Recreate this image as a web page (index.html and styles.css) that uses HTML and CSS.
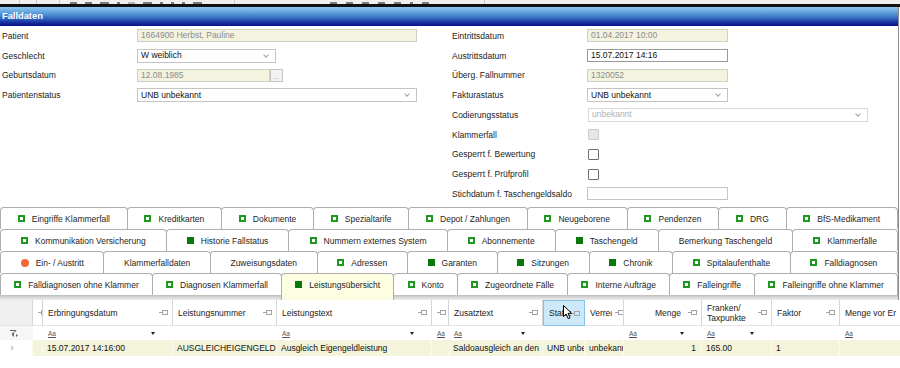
FILE: index.html
```html
<!DOCTYPE html>
<html lang="de">
<head>
    <meta charset="UTF-8">
    <meta name="viewport" content="width=device-width, initial-scale=1.0">
    <title>Falldaten</title>
    <link rel="stylesheet" href="styles.css">
</head>
<body>
    <!-- Toolbar (only the bottom edge is visible) -->
    <div class="toolbar">
        <div class="tb-group tb-g1"></div>
        <div class="tb-group tb-g2"></div>
        <div class="tb-group tb-g3"></div>
        <div class="tb-group tb-g4">
            <span class="tb-icon"></span><span class="tb-icon"></span><span class="tb-icon wide"></span>
            <span class="tb-icon small"></span><span class="tb-icon light"></span><span class="tb-icon wide"></span>
            <span class="tb-icon small"></span><span class="tb-icon small"></span><span class="tb-icon small"></span>
            <span class="tb-icon wide"></span>
        </div>
        <div class="tb-group tb-g5">
            <span class="tb-icon"></span><span class="tb-icon"></span><span class="tb-icon"></span>
            <span class="tb-icon"></span><span class="tb-icon"></span><span class="tb-icon small"></span>
            <span class="tb-icon"></span>
        </div>
    </div>

    <div class="window">
        <div class="panel-title">Falldaten</div>

        <div class="form">
            <div class="col col-left">
                <div class="row">
                    <span class="label">Patient</span>
                    <span class="field ro w-wide">1664900 Herbst, Pauline</span>
                </div>
                <div class="row">
                    <span class="label">Geschlecht</span>
                    <span class="field select w-sel">W weiblich<i class="chev"></i></span>
                </div>
                <div class="row">
                    <span class="label">Geburtsdatum</span>
                    <span class="field ro w-date">12.08.1985</span><span class="dots-btn">...</span>
                </div>
                <div class="row">
                    <span class="label">Patientenstatus</span>
                    <span class="field select w-wide">UNB unbekannt<i class="chev"></i></span>
                </div>
            </div>
            <div class="col col-right">
                <div class="row">
                    <span class="label">Eintrittsdatum</span>
                    <span class="field ro w-right">01.04.2017 10:00</span>
                </div>
                <div class="row">
                    <span class="label">Austrittsdatum</span>
                    <span class="field active w-right">15.07.2017 14:16</span>
                </div>
                <div class="row">
                    <span class="label">Überg. Fallnummer</span>
                    <span class="field ro w-right">1320052</span>
                </div>
                <div class="row">
                    <span class="label">Fakturastatus</span>
                    <span class="field select w-right">UNB unbekannt<i class="chev"></i></span>
                </div>
                <div class="row">
                    <span class="label">Codierungsstatus</span>
                    <span class="field select disabled w-code">unbekannt<i class="chev"></i></span>
                </div>
                <div class="row">
                    <span class="label">Klammerfall</span>
                    <span class="check disabled"></span>
                </div>
                <div class="row">
                    <span class="label">Gesperrt f. Bewertung</span>
                    <span class="check"></span>
                </div>
                <div class="row">
                    <span class="label">Gesperrt f. Prüfprofil</span>
                    <span class="check"></span>
                </div>
                <div class="row">
                    <span class="label">Stichdatum f. Taschengeldsaldo</span>
                    <span class="field w-right"></span>
                </div>
            </div>
        </div>

        <!-- Tabs -->
        <div class="tabs">
            <div class="tab-row">
                <div class="tab"><i class="ico"></i>Eingriffe Klammerfall</div>
                <div class="tab"><i class="ico"></i>Kreditkarten</div>
                <div class="tab"><i class="ico"></i>Dokumente</div>
                <div class="tab"><i class="ico"></i>Spezialtarife</div>
                <div class="tab"><i class="ico"></i>Depot / Zahlungen</div>
                <div class="tab"><i class="ico"></i>Neugeborene</div>
                <div class="tab"><i class="ico"></i>Pendenzen</div>
                <div class="tab"><i class="ico"></i>DRG</div>
                <div class="tab"><i class="ico"></i>BfS-Medikament</div>
            </div>
            <div class="tab-row">
                <div class="tab"><i class="ico"></i>Kommunikation Versicherung</div>
                <div class="tab"><i class="ico full"></i>Historie Fallstatus</div>
                <div class="tab"><i class="ico"></i>Nummern externes System</div>
                <div class="tab"><i class="ico"></i>Abonnemente</div>
                <div class="tab"><i class="ico full"></i>Taschengeld</div>
                <div class="tab">Bemerkung Taschengeld</div>
                <div class="tab"><i class="ico"></i>Klammerfälle</div>
            </div>
            <div class="tab-row">
                <div class="tab"><i class="ico dot"></i>Ein- / Austritt</div>
                <div class="tab">Klammerfalldaten</div>
                <div class="tab">Zuweisungsdaten</div>
                <div class="tab"><i class="ico"></i>Adressen</div>
                <div class="tab"><i class="ico full"></i>Garanten</div>
                <div class="tab"><i class="ico full"></i>Sitzungen</div>
                <div class="tab"><i class="ico full"></i>Chronik</div>
                <div class="tab"><i class="ico"></i>Spitalaufenthalte</div>
                <div class="tab"><i class="ico"></i>Falldiagnosen</div>
            </div>
            <div class="tab-row">
                <div class="tab"><i class="ico"></i>Falldiagnosen ohne Klammer</div>
                <div class="tab"><i class="ico"></i>Diagnosen Klammerfall</div>
                <div class="tab selected"><i class="ico full"></i>Leistungsübersicht</div>
                <div class="tab"><i class="ico"></i>Konto</div>
                <div class="tab"><i class="ico"></i>Zugeordnete Fälle</div>
                <div class="tab"><i class="ico"></i>Interne Aufträge</div>
                <div class="tab"><i class="ico"></i>Falleingriffe</div>
                <div class="tab"><i class="ico"></i>Falleingriffe ohne Klammer</div>
            </div>
        </div>
        <div class="tab-base"></div>

        <!-- Leistungen grid -->
        <table class="grid">
            <colgroup>
                <col class="c-sel"><col class="c-nar"><col class="c-date"><col class="c-nr"><col class="c-text">
                <col class="c-nar2"><col class="c-zus"><col class="c-stat"><col class="c-ver"><col class="c-menge">
                <col class="c-fr"><col class="c-fak"><col class="c-mv">
            </colgroup>
            <tr class="head">
                <th class="rowhead"></th>
                <th><div class="hc"><span class="ht"></span><i class="pin"></i></div></th>
                <th><div class="hc"><span class="ht">Erbringungsdatum</span><i class="pin"></i></div></th>
                <th><div class="hc"><span class="ht">Leistungsnummer</span><i class="pin"></i></div></th>
                <th><div class="hc"><span class="ht">Leistungstext</span><i class="pin"></i></div></th>
                <th><div class="hc"><span class="ht"></span><i class="pin"></i></div></th>
                <th><div class="hc"><span class="ht">Zusatztext</span><i class="pin"></i></div></th>
                <th class="hover">
                    <div class="hc"><span class="ht">Status</span><i class="pin"></i></div>
                    <svg class="cursor" width="10" height="15" viewBox="0 0 10 15">
                        <path d="M0.5 0.5 L0.5 11.5 L3.2 9 L5.2 13.6 L7 12.8 L5 8.3 L8.6 8.3 Z" fill="#fff" stroke="#000" stroke-width="1"/>
                    </svg>
                </th>
                <th><div class="hc"><span class="ht ver">Verrechnung</span><i class="pin"></i></div></th>
                <th><div class="hc right"><span class="ht">Menge</span><i class="pin"></i></div></th>
                <th><div class="hc"><span class="ht">Franken/<br>Taxpunkte</span><i class="pin"></i></div></th>
                <th><div class="hc"><span class="ht">Faktor</span><i class="pin"></i></div></th>
                <th><div class="hc"><span class="ht">Menge vor Erfassung</span></div></th>
            </tr>
            <tr class="filter">
                <td class="rowhead">
                    <svg class="funnel" width="8" height="7" viewBox="0 0 8 7">
                        <path d="M0 0.5 H6 L3.5 3 V6.5 M2.5 3 V5.5" fill="none" stroke="#666" stroke-width="1"/>
                        <path d="M6 4 L8 5.5 L6 7 Z" fill="#666"/>
                    </svg>
                </td>
                <td></td>
                <td><div class="fc"><span class="aa">Aa</span><i class="dd"></i></div></td>
                <td></td>
                <td><div class="fc"><span class="aa">Aa</span><i class="dd"></i></div></td>
                <td><div class="fc"><span class="aa">Aa</span></div></td>
                <td><div class="fc"><span class="aa">Aa</span><i class="dd"></i></div></td>
                <td></td>
                <td></td>
                <td><div class="fc"><span class="aa">Aa</span><i class="dd"></i></div></td>
                <td><div class="fc"><span class="aa">Aa</span><i class="dd"></i></div></td>
                <td></td>
                <td><div class="fc"><span class="aa">Aa</span></div></td>
            </tr>
            <tr class="data">
                <td class="rowhead"><i class="row-arrow"></i></td>
                <td></td>
                <td>15.07.2017 14:16:00</td>
                <td>AUSGLEICHEIGENGELD</td>
                <td>Ausgleich Eigengeldleistung</td>
                <td></td>
                <td>Saldoausgleich an den</td>
                <td>UNB unbekannt</td>
                <td>unbekannt</td>
                <td class="num">1</td>
                <td>165.00</td>
                <td>1</td>
                <td></td>
            </tr>
        </table>
    </div>
</body>
</html>
```

FILE: styles.css
```css
body {
    margin: 0;
    background: #fff;
    font-family: "Liberation Sans", Arial, sans-serif;
    font-size: 8.5px;
    color: #1e1e1e;
    width: 900px;
    overflow: hidden;
}

/* Toolbar */
.toolbar {
    height: 4px;
    background: #efefef;
    border-bottom: 3px solid #111;
    display: flex;
}
.tb-group {
    display: flex;
    align-items: flex-end;
    gap: 8px;
    border-right: 1px solid #c9c9c9;
    box-sizing: border-box;
}
.tb-g1 { width: 20px; }
.tb-g2 { width: 17px; }
.tb-g3 { width: 23px; }
.tb-g4 { width: 175px; padding-left: 10px; }
.tb-g5 { width: 250px; padding-left: 95px; gap: 9px; }
.tb-icon {
    width: 7px;
    height: 2px;
    background: #7a7a7a;
}
.tb-icon.wide { width: 9px; }
.tb-icon.small { width: 3px; }
.tb-icon.light { background: #b8b8b8; }

/* Window */
.window {
    width: 898px;
    border-right: 1px solid #8c8c8c;
}
.panel-title {
    height: 19px;
    line-height: 19px;
    padding-left: 2px;
    color: #fff;
    font-weight: bold;
    font-size: 9.3px;
    background: linear-gradient(to bottom, #8ec8ee 0%, #5d9fdc 30%, #3268bf 60%, #13289a 85%, #0a1488 100%);
}

/* Form */
.form {
    display: flex;
    height: 181px;
}
.col {
    padding-left: 2px;
    box-sizing: border-box;
}
.col-left { width: 450px; }
.col-right { flex: 1; }
.row {
    height: 19.75px;
    display: flex;
    align-items: center;
}
.label {
    width: 135px;
    flex: none;
    color: #222;
}
.field {
    height: 13px;
    line-height: 11px;
    box-sizing: border-box;
    border: 1px solid #c4c4c4;
    padding: 0 3px;
    background: #fff;
    color: #111;
    white-space: nowrap;
    display: flex;
    align-items: center;
}
.field.ro {
    background: #f3f3e0;
    color: #8c8c8c;
    border-color: #d0d0c4;
}
.field.active {
    border-color: #9a9a9a;
}
.field.select {
    height: 14px;
    justify-content: space-between;
}
.field.disabled {
    color: #b0b0b0;
    border-color: #d8d8d8;
}
.chev {
    width: 3px;
    height: 3px;
    border-right: 1px solid #a0a0a0;
    border-bottom: 1px solid #a0a0a0;
    transform: rotate(45deg);
    margin: 0 4px 2px 0;
}
.w-wide { width: 280px; }
.w-sel { width: 139px; }
.w-date { width: 133px; }
.w-right { width: 141px; }
.w-code { width: 280px; margin-left: 1px; }
.dots-btn {
    width: 13px;
    height: 13px;
    box-sizing: border-box;
    border: 1px solid #c4c4c4;
    background: #f2f2f2;
    color: #999;
    font-size: 7px;
    line-height: 13px;
    text-align: center;
}
.check {
    width: 11px;
    height: 11px;
    box-sizing: border-box;
    border: 1px solid #6e6e6e;
    border-radius: 1px;
    background: #fff;
    margin-left: 1px;
}
.check.disabled {
    background: #e6e6e6;
    border-color: #cbcbcb;
}

/* Tabs */
.tabs {
    width: 898px;
}
.tab-row {
    display: flex;
    height: 22px;
}
.tab {
    flex: 1 1 auto;
    display: flex;
    align-items: center;
    justify-content: center;
    gap: 7px;
    padding: 0 3px;
    margin-right: -1px;
    border: 1px solid #adadad;
    border-bottom: none;
    border-radius: 4px 4px 0 0;
    background: #fff;
    color: #252525;
    white-space: nowrap;
}
.tab:last-child {
    margin-right: 0;
}
.tab.selected {
    background: #fdfde2;
    height: 27px;
    box-sizing: border-box;
    padding-bottom: 5px;
    position: relative;
    z-index: 1;
}
.ico {
    width: 7px;
    height: 7px;
    box-sizing: border-box;
    border: 2px solid #1d9a1d;
    flex: none;
}
.ico.full {
    background: #087808;
    border-color: #087808;
}
.ico.dot {
    border: none;
    border-radius: 50%;
    background: #f26a3c;
    width: 8px;
    height: 8px;
}
.tab-base {
    height: 5px;
    background: linear-gradient(to bottom, #bdbdbd, #dedede 60%, #ececec);
}

/* Grid */
.grid {
    width: 898px;
    table-layout: fixed;
    border-collapse: separate;
    border-spacing: 0;
    font-size: 8.5px;
}
.c-sel { width: 33px; }
.c-nar { width: 10px; }
.c-date { width: 130px; }
.c-nr { width: 104px; }
.c-text { width: 155px; }
.c-nar2 { width: 17px; }
.c-zus { width: 94px; }
.c-stat { width: 42px; }
.c-ver { width: 39px; }
.c-menge { width: 78px; }
.c-fr { width: 70px; }
.c-fak { width: 68px; }
.c-mv { width: 61px; }

.grid th,
.grid td {
    padding: 0;
    overflow: hidden;
    white-space: nowrap;
}
.head th {
    height: 26px;
    box-sizing: border-box;
    border-right: 1px solid #d6d6d6;
    border-bottom: 1px solid #e4e4e4;
    background: #fff;
    font-weight: normal;
    text-align: left;
    color: #222;
}
.head th.rowhead {
    background: #efefef;
}
.head th.hover {
    background: #cde8f8;
    border: 1px solid #86c2e6;
    position: relative;
}
.hc {
    display: flex;
    align-items: center;
    padding: 0 4px 0 5px;
}
.hc.right {
    justify-content: flex-end;
    gap: 7px;
}
.ht {
    flex: 1;
    overflow: hidden;
    line-height: 10px;
}
.hc.right .ht {
    flex: none;
}
.ht.ver {
    flex: none;
    width: 22px;
    margin-right: 3px;
}
.pin {
    width: 9px;
    height: 5px;
    flex: none;
    position: relative;
}
.pin::before {
    content: "";
    position: absolute;
    left: 0;
    top: 2px;
    width: 3px;
    height: 1px;
    background: #a4a4a4;
}
.pin::after {
    content: "";
    position: absolute;
    left: 3px;
    top: 0;
    width: 4px;
    height: 3px;
    border: 1px solid #a4a4a4;
}
.cursor {
    position: absolute;
    left: 19px;
    top: 4px;
}

.filter td {
    height: 14px;
    background: #fff;
}
.filter td.rowhead {
    background: #f6f6f6;
    padding-left: 10px;
}
.funnel {
    display: block;
}
.fc {
    display: flex;
    align-items: center;
    justify-content: space-between;
    padding: 0 18px 0 5px;
}
.aa {
    font-size: 6.5px;
    color: #555;
    text-decoration: underline;
}
.dd {
    width: 0;
    height: 0;
    border-left: 2.5px solid transparent;
    border-right: 2.5px solid transparent;
    border-top: 3px solid #222;
}

.data td {
    height: 16px;
    box-sizing: border-box;
    background: #f4f4db;
    border-right: 1px solid #fbfbf0;
    padding-left: 4px;
    color: #111;
}
.data td.rowhead {
    background: #fff;
    padding-left: 11px;
}
.data td.num {
    text-align: right;
    padding-right: 5px;
}
.row-arrow {
    display: block;
    width: 0;
    height: 0;
    border-top: 3px solid transparent;
    border-bottom: 3px solid transparent;
    border-left: 3px solid #d0d0d0;
}
```
